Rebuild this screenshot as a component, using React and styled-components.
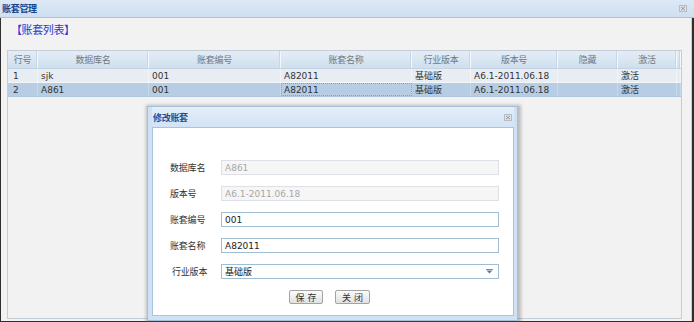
import React from "react";
import styled, { createGlobalStyle } from "styled-components";

const Global = createGlobalStyle`
  html, body { margin: 0; padding: 0; background: #2e2e2e; }
  body { font-family: "DejaVu Sans", "Noto Sans CJK SC", sans-serif; font-size: 9px; }
  * { box-sizing: border-box; }
`;

const Window = styled.div`
  position: relative;
  width: 694px;
  height: 322px;
  display: flex;
  flex-direction: column;
  overflow: hidden;
`;

const TitleBar = styled.div`
  height: 18px;
  flex: none;
  display: flex;
  align-items: center;
  justify-content: space-between;
  padding: 0 7px 1px 2px;
  background: linear-gradient(#dce8f4, #cfdff0);
  border-bottom: 1px solid #a9c3de;
`;

const TitleText = styled.span`
  font-size: 9px;
  font-weight: bold;
  color: ${(p) => p.color || "#15428b"};
  letter-spacing: -0.3px;
`;

const CloseIcon = () => (
  <svg width="8" height="7" viewBox="0 0 8 7">
    <rect x="0.5" y="0.5" width="7" height="6" fill="#dfe3e8" stroke="#b7bcc3" />
    <path d="M2 1.8 L6 5.2 M6 1.8 L2 5.2" stroke="#8f969e" strokeWidth="1" />
  </svg>
);

const BodyFrame = styled.div`
  flex: 1;
  display: flex;
  border-left: 1px solid #2e2e2e;
  border-right: 2px solid #2e2e2e;
  border-bottom: 1px solid #2e2e2e;
`;

const Content = styled.div`
  flex: 1;
  display: flex;
  flex-direction: column;
  background: #f2f2f2;
  border-right: 1px solid #c8cdd3;
  padding: 6px 9px 2px 6px;
`;

const Heading = styled.div`
  height: 14px;
  line-height: 14px;
  font-size: 11px;
  color: #3138d0;
  padding-left: 4px;
  margin-bottom: 12px;
  letter-spacing: -0.4px;
`;

const Grid = styled.div`
  flex: 1;
  border: 1px solid #c4ccd4;
  background: #f2f2f2;
`;

const COLS = "30px 111px 132px 131px 59px 87px 60px 59px 4px";

const HeaderRow = styled.div`
  display: grid;
  grid-template-columns: ${COLS};
  height: 18px;
  background: linear-gradient(#e4edf6, #cfdfee);
  border-bottom: 1px solid #c2d3e4;
`;

const HeadCell = styled.div`
  display: flex;
  align-items: center;
  justify-content: center;
  color: #6f7a85;
  font-size: 9px;
  border-right: 1px solid #f4f8fc;
  box-shadow: inset -1px 0 0 #c4d6e8;
  letter-spacing: -0.3px;
`;

const Row = styled.div`
  display: grid;
  grid-template-columns: ${COLS};
  height: 14px;
  background: ${(p) => (p.selected ? "#b6cde3" : "#e7edf3")};
  border-bottom: 1px solid ${(p) => (p.selected ? "#aec6de" : "#f4f6f8")};
`;

const Cell = styled.div`
  display: flex;
  align-items: center;
  padding-left: ${(p) => (p.first ? "5px" : "3px")};
  color: #333;
  font-size: 9px;
  white-space: nowrap;
  overflow: hidden;
  border-right: 1px solid ${(p) => (p.selected ? "#c6d8ea" : "#f2f5f8")};
  outline: ${(p) => (p.focus ? "1px dotted #7fa3c6" : "none")};
  outline-offset: -1px;
`;

const Modal = styled.div`
  position: absolute;
  left: 147px;
  top: 106px;
  width: 371px;
  height: 215px;
  background: #cfe1f4;
  border: 1px solid #a6bfd9;
  box-shadow: 1px 1px 3px 2px rgba(90, 90, 90, 0.35);
  display: flex;
  flex-direction: column;
  padding: 0 3px 4px 4px;
`;

const ModalTitle = styled.div`
  height: 20px;
  flex: none;
  display: flex;
  align-items: center;
  justify-content: space-between;
  padding: 0 2px 0 1px;
  background: linear-gradient(#e4eefa, #d2e3f5);
`;

const ModalBody = styled.div`
  flex: 1;
  background: #fff;
  border: 1px solid #a9c4e0;
  padding: 32px 14px 0 17px;
  display: flex;
  flex-direction: column;
  gap: 11px;
`;

const FormRow = styled.div`
  display: flex;
  align-items: center;
  height: 15px;
`;

const Label = styled.div`
  width: 51px;
  font-size: 9px;
  color: #333;
  padding-left: ${(p) => p.indent || 0}px;
  letter-spacing: -0.2px;
`;

const Input = styled.div`
  flex: 1;
  height: 15px;
  display: flex;
  align-items: center;
  justify-content: space-between;
  padding: 0 5px 0 3px;
  font-size: 9px;
  color: ${(p) => (p.disabled ? "#a7a7a7" : "#222")};
  background: ${(p) => (p.disabled ? "#f6f6f6" : "#fff")};
  border: 1px solid ${(p) => (p.disabled ? "#dde1e5" : "#9fbdd3")};
`;

const Arrow = () => (
  <svg width="7" height="5" viewBox="0 0 7 5">
    <rect x="0" y="0" width="7" height="1" fill="#6a8fc0" />
    <path d="M0.5 1.5 L6.5 1.5 L3.5 4.5 Z" fill="#4f7cb8" />
  </svg>
);

const ButtonRow = styled.div`
  display: flex;
  gap: 12px;
  padding-left: 119px;
`;

const Button = styled.div`
  width: ${(p) => p.w}px;
  height: 14px;
  display: flex;
  align-items: center;
  justify-content: center;
  font-size: 9px;
  color: #333;
  letter-spacing: 3px;
  padding-left: 3px;
  border: 1px solid #a3a3a3;
  border-radius: 2px;
  background: linear-gradient(#fbfbfb, #e1e1e1);
`;

const columns = ["行号", "数据库名", "账套编号", "账套名称", "行业版本", "版本号", "隐藏", "激活", ""];
const rows = [
  ["1", "sjk", "001", "A82011", "基础版", "A6.1-2011.06.18", "", "激活", ""],
  ["2", "A861", "001", "A82011", "基础版", "A6.1-2011.06.18", "", "激活", ""],
];

export default function App() {
  return (
    <>
      <Global />
      <Window>
        <TitleBar>
          <TitleText>账套管理</TitleText>
          <CloseIcon />
        </TitleBar>
        <BodyFrame>
          <Content>
            <Heading>【账套列表】</Heading>
            <Grid>
              <HeaderRow>
                {columns.map((c, i) => (
                  <HeadCell key={i}>{c}</HeadCell>
                ))}
              </HeaderRow>
              {rows.map((r, ri) => (
                <Row key={ri} selected={ri === 1}>
                  {r.map((v, ci) => (
                    <Cell key={ci} first={ci === 0} selected={ri === 1} focus={ri === 1 && ci === 3}>
                      {v}
                    </Cell>
                  ))}
                </Row>
              ))}
            </Grid>
          </Content>
        </BodyFrame>
        <Modal>
          <ModalTitle>
            <TitleText color="#1d4f96">修改账套</TitleText>
            <CloseIcon />
          </ModalTitle>
          <ModalBody>
            <FormRow>
              <Label>数据库名</Label>
              <Input disabled>A861</Input>
            </FormRow>
            <FormRow>
              <Label>版本号</Label>
              <Input disabled>A6.1-2011.06.18</Input>
            </FormRow>
            <FormRow>
              <Label>账套编号</Label>
              <Input>001</Input>
            </FormRow>
            <FormRow>
              <Label>账套名称</Label>
              <Input>A82011</Input>
            </FormRow>
            <FormRow>
              <Label indent={2}>行业版本</Label>
              <Input>
                基础版
                <Arrow />
              </Input>
            </FormRow>
            <ButtonRow>
              <Button w={34}>保存</Button>
              <Button w={35}>关闭</Button>
            </ButtonRow>
          </ModalBody>
        </Modal>
      </Window>
    </>
  );
}
